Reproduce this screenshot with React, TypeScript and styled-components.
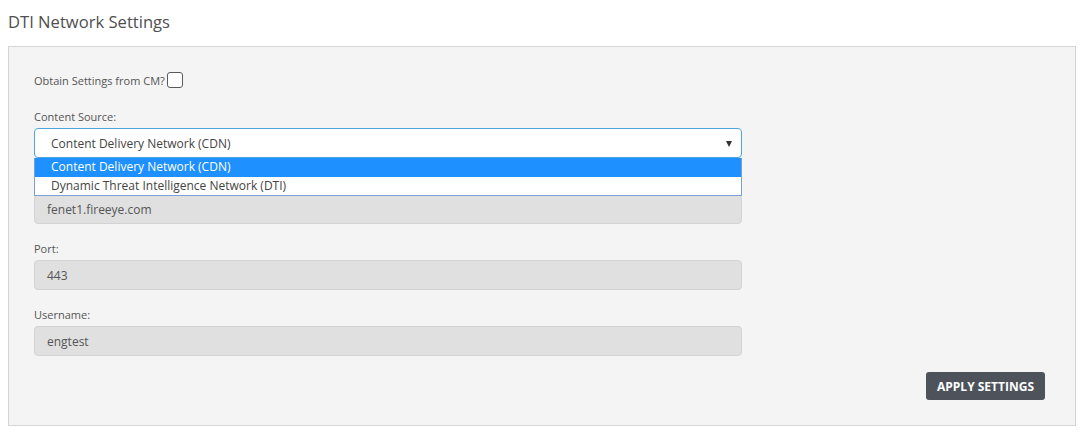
import React from "react";
import styled, { createGlobalStyle } from "styled-components";

const Global = createGlobalStyle`
  html, body { margin: 0; padding: 0; background: #ffffff; }
  body { font-family: "Open Sans", "Liberation Sans", sans-serif; color: #555; }
  * { box-sizing: border-box; }
`;

const Page = styled.div`
  padding: 0 5px 0 8px;
  width: 1081px;
`;

const Title = styled.h2`
  margin: 0;
  padding: 10px 0 12px 0;
  font-size: 16.6px;
  font-weight: 400;
  line-height: 24px;
  color: #4f4f4f;
`;

const Panel = styled.div`
  background: #f4f4f4;
  border: 1px solid #d5d5d5;
  padding: 25px 29px 25px 25px;
  display: flex;
  flex-direction: column;
  width: 1068px;
`;

const Form = styled.div`
  width: 708px;
  display: flex;
  flex-direction: column;
`;

const CheckRow = styled.label`
  display: flex;
  align-items: center;
  gap: 2px;
  font-size: 11px;
  line-height: 17px;
  color: #555;
  margin-bottom: 20px;
`;

const CheckBox = styled.span`
  display: inline-block;
  width: 16px;
  height: 16px;
  border: 1px solid #5a5a5a;
  border-radius: 3px;
  background: #fff;
  margin-top: -1px;
`;

const Group = styled.div`
  display: flex;
  flex-direction: column;
  margin-bottom: 17px;
  position: relative;
`;

const Label = styled.div`
  font-size: 11px;
  line-height: 15px;
  height: 15px;
  color: #555;
  margin-bottom: 4px;
`;

const SelectBox = styled.div`
  height: 30px;
  border: 1px solid #4ea6e0;
  border-radius: 4px;
  background: #fff;
  display: flex;
  align-items: center;
  justify-content: space-between;
  padding: 0 9px 0 16px;
  font-size: 12px;
  color: #444;
`;

const Arrow = styled.span`
  width: 0;
  height: 0;
  border-left: 3.5px solid transparent;
  border-right: 3.5px solid transparent;
  border-top: 6px solid #333;
  margin-top: 1px;
`;

const DropList = styled.div`
  position: absolute;
  left: 0;
  right: 0;
  top: 100%;
  margin-top: 0;
  background: #fff;
  border: 1px solid #7b9fd8;
  border-top: none;
  z-index: 5;
`;

const Option = styled.div<{ $active?: boolean }>`
  height: 18.5px;
  line-height: 18px;
  padding-left: 16px;
  font-size: 12px;
  background: ${(p) => (p.$active ? "#1e90ff" : "#fff")};
  color: ${(p) => (p.$active ? "#fff" : "#444")};
`;

const Input = styled.div`
  height: 30px;
  border: 1px solid #d3d3d3;
  border-radius: 4px;
  background: #e0e0e0;
  display: flex;
  align-items: center;
  padding: 0 12px;
  font-size: 12px;
  color: #555;
`;

const Footer = styled.div`
  display: flex;
  justify-content: flex-end;
  margin-top: -1px;
  padding-right: 1px;
`;

const Button = styled.button`
  height: 28px;
  padding: 0 11px;
  border: none;
  border-radius: 3px;
  background: #4d525b;
  color: #fff;
  font-family: "Open Sans", "Liberation Sans", sans-serif;
  font-weight: 700;
  font-size: 12px;
  text-transform: uppercase;
`;

export default function App() {
  return (
    <Page>
      <Global />
      <Title>DTI Network Settings</Title>
      <Panel>
        <Form>
          <CheckRow>
            Obtain Settings from CM?
            <CheckBox />
          </CheckRow>
          <Group>
            <Label>Content Source:</Label>
            <SelectBox>
              Content Delivery Network (CDN)
              <Arrow />
            </SelectBox>
            <DropList>
              <Option $active>Content Delivery Network (CDN)</Option>
              <Option>Dynamic Threat Intelligence Network (DTI)</Option>
            </DropList>
          </Group>
          <Group>
            <Label aria-hidden="true" />
            <Input>fenet1.fireeye.com</Input>
          </Group>
          <Group>
            <Label>Port:</Label>
            <Input>443</Input>
          </Group>
          <Group>
            <Label>Username:</Label>
            <Input>engtest</Input>
          </Group>
        </Form>
        <Footer>
          <Button>Apply Settings</Button>
        </Footer>
      </Panel>
    </Page>
  );
}
